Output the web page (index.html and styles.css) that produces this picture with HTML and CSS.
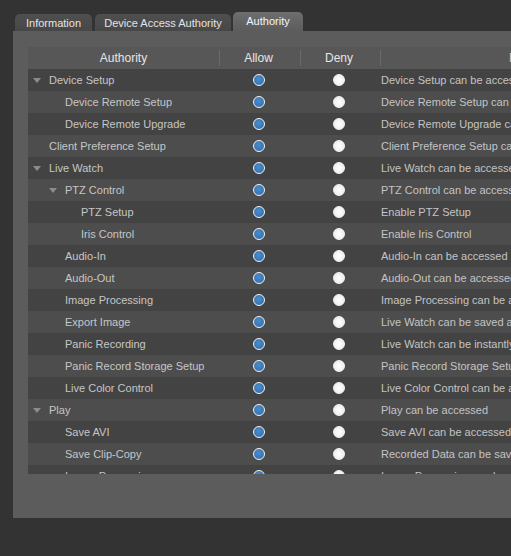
FILE: index.html
```html
<!DOCTYPE html>
<html>
<head>
<meta charset="utf-8">
<link rel="stylesheet" href="styles.css">
</head>
<body>
<div class="tabs">
  <div class="tab t1">Information</div>
  <div class="tab t2">Device Access Authority</div>
  <div class="tab active">Authority</div>
</div>
<div class="panel">
  <div class="table">
    <div class="row head">
      <div class="c name">Authority</div>
      <div class="c allow">Allow</div>
      <div class="c deny">Deny</div>
      <div class="c desc">Description</div>
    </div>
    <div class="row"><div class="c name l0"><span class="tri"></span>Device Setup</div><div class="c allow"><span class="radio on"></span></div><div class="c deny"><span class="radio"></span></div><div class="c desc">Device Setup can be accessed</div></div>
    <div class="row"><div class="c name l1">Device Remote Setup</div><div class="c allow"><span class="radio on"></span></div><div class="c deny"><span class="radio"></span></div><div class="c desc">Device Remote Setup can be accessed</div></div>
    <div class="row"><div class="c name l1">Device Remote Upgrade</div><div class="c allow"><span class="radio on"></span></div><div class="c deny"><span class="radio"></span></div><div class="c desc">Device Remote Upgrade can be accessed</div></div>
    <div class="row"><div class="c name l0">Client Preference Setup</div><div class="c allow"><span class="radio on"></span></div><div class="c deny"><span class="radio"></span></div><div class="c desc">Client Preference Setup can be accessed</div></div>
    <div class="row"><div class="c name l0"><span class="tri"></span>Live Watch</div><div class="c allow"><span class="radio on"></span></div><div class="c deny"><span class="radio"></span></div><div class="c desc">Live Watch can be accessed</div></div>
    <div class="row"><div class="c name l1"><span class="tri"></span>PTZ Control</div><div class="c allow"><span class="radio on"></span></div><div class="c deny"><span class="radio"></span></div><div class="c desc">PTZ Control can be accessed</div></div>
    <div class="row"><div class="c name l2">PTZ Setup</div><div class="c allow"><span class="radio on"></span></div><div class="c deny"><span class="radio"></span></div><div class="c desc">Enable PTZ Setup</div></div>
    <div class="row"><div class="c name l2">Iris Control</div><div class="c allow"><span class="radio on"></span></div><div class="c deny"><span class="radio"></span></div><div class="c desc">Enable Iris Control</div></div>
    <div class="row"><div class="c name l1">Audio-In</div><div class="c allow"><span class="radio on"></span></div><div class="c deny"><span class="radio"></span></div><div class="c desc">Audio-In can be accessed</div></div>
    <div class="row"><div class="c name l1">Audio-Out</div><div class="c allow"><span class="radio on"></span></div><div class="c deny"><span class="radio"></span></div><div class="c desc">Audio-Out can be accessed</div></div>
    <div class="row"><div class="c name l1">Image Processing</div><div class="c allow"><span class="radio on"></span></div><div class="c deny"><span class="radio"></span></div><div class="c desc">Image Processing can be accessed</div></div>
    <div class="row"><div class="c name l1">Export Image</div><div class="c allow"><span class="radio on"></span></div><div class="c deny"><span class="radio"></span></div><div class="c desc">Live Watch can be saved as image</div></div>
    <div class="row"><div class="c name l1">Panic Recording</div><div class="c allow"><span class="radio on"></span></div><div class="c deny"><span class="radio"></span></div><div class="c desc">Live Watch can be instantly recorded</div></div>
    <div class="row"><div class="c name l1">Panic Record Storage Setup</div><div class="c allow"><span class="radio on"></span></div><div class="c deny"><span class="radio"></span></div><div class="c desc">Panic Record Storage Setup can be accessed</div></div>
    <div class="row"><div class="c name l1">Live Color Control</div><div class="c allow"><span class="radio on"></span></div><div class="c deny"><span class="radio"></span></div><div class="c desc">Live Color Control can be accessed</div></div>
    <div class="row"><div class="c name l0"><span class="tri"></span>Play</div><div class="c allow"><span class="radio on"></span></div><div class="c deny"><span class="radio"></span></div><div class="c desc">Play can be accessed</div></div>
    <div class="row"><div class="c name l1">Save AVI</div><div class="c allow"><span class="radio on"></span></div><div class="c deny"><span class="radio"></span></div><div class="c desc">Save AVI can be accessed</div></div>
    <div class="row"><div class="c name l1">Save Clip-Copy</div><div class="c allow"><span class="radio on"></span></div><div class="c deny"><span class="radio"></span></div><div class="c desc">Recorded Data can be saved</div></div>
    <div class="row"><div class="c name l1">Image Processing</div><div class="c allow"><span class="radio on"></span></div><div class="c deny"><span class="radio"></span></div><div class="c desc">Image Processing can be accessed</div></div>
  </div>
</div>
</body>
</html>
```
FILE: styles.css
```css
html, body {
  margin: 0;
  padding: 0;
  background: #333333;
  overflow: hidden;
}
body {
  width: 511px;
  height: 556px;
  font-family: "Liberation Sans", Arial, sans-serif;
  font-size: 11px;
}
.tabs {
  display: flex;
  align-items: flex-end;
  padding: 12px 0 0 15px;
  height: 19px;
}
.tab {
  height: 17px;
  line-height: 18px;
  background: linear-gradient(#4f4f4f, #474747);
  color: #e4e4e4;
  border-radius: 5px 5px 0 0;
  text-align: center;
  box-sizing: border-box;
}
.t1 { width: 77px; margin-right: 3px; }
.t2 { width: 136px; margin-right: 2px; }
.tab.active {
  width: 70px;
  height: 19px;
  line-height: 18px;
  background: linear-gradient(#6e6e6e, #5c5c5c);
  color: #f2f6ff;
}
.panel {
  margin-left: 13px;
  height: 487px;
  background: #5c5c5c;
  padding: 16px 0 0 15px;
  box-sizing: border-box;
  overflow: hidden;
}
.table {
  height: 427px;
  width: 700px;
  overflow: hidden;
}
.row {
  display: grid;
  grid-template-columns: 191px 81px 80px 348px;
  height: 22px;
  align-items: center;
  background: #434343;
  color: #c6c6c6;
}
.row:nth-child(odd) { background: #4d4d4d; }
.row.head {
  background: #575757;
  color: #e6e6e6;
  font-size: 12px;
}
.c {
  white-space: nowrap;
  overflow: hidden;
  height: 22px;
  line-height: 22px;
  display: flex;
  align-items: center;
}
.head .c {
  justify-content: center;
  position: relative;
}
.head .c + .c::before {
  content: "";
  position: absolute;
  left: 0;
  top: 3px;
  bottom: 3px;
  width: 1px;
  background: #6a6a6a;
}
.name.l0 { padding-left: 21px; }
.name.l1 { padding-left: 37px; }
.name.l2 { padding-left: 53px; }
.tri {
  width: 0;
  height: 0;
  border-left: 4px solid transparent;
  border-right: 4px solid transparent;
  border-top: 5px solid #8c8c8c;
  margin-left: -16px;
  margin-right: 8px;
  margin-top: 1px;
}
.allow, .deny {
  justify-content: center;
}
.allow { padding-right: 2px; box-sizing: border-box; }
.deny { padding-right: 2px; box-sizing: border-box; }
.radio {
  width: 12px;
  height: 12px;
  border-radius: 50%;
  box-sizing: border-box;
  border: 1.5px solid #f4f4f4;
  background: radial-gradient(circle at 50% 50%, #ffffff 0, #f2f2f2 60%, #e0e0e0 100%);
}
.radio.on {
  background: radial-gradient(circle at 45% 40%, #4a8ccc 0, #3a78b4 60%, #2e6aa4 100%);
}
.desc {
  padding-left: 1px;
  color: #c4c4c4;
}
.head .desc {
  justify-content: flex-start;
  padding-left: 129px;
}
```
